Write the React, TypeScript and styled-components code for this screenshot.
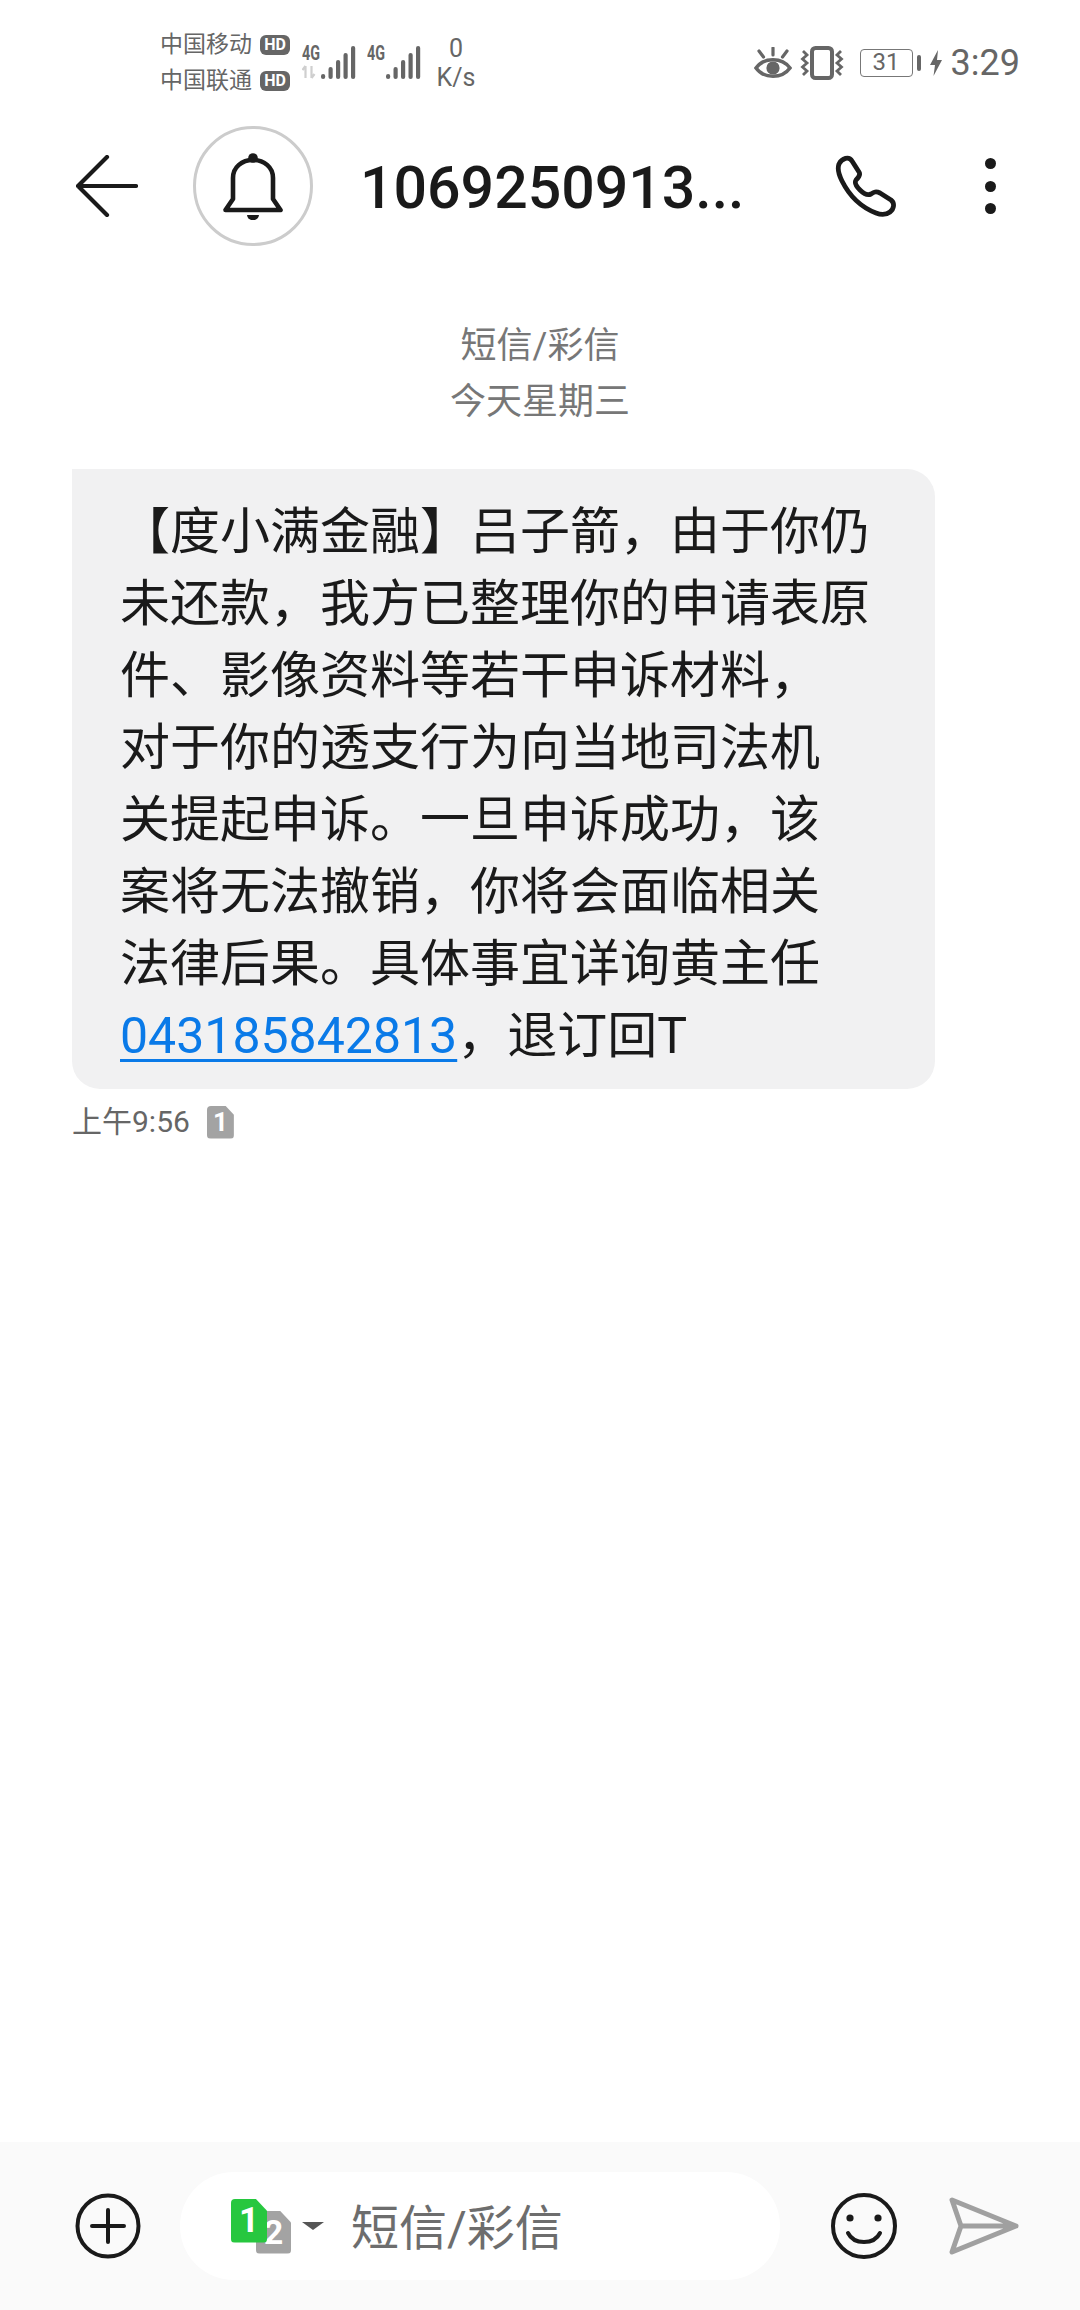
import styled, { createGlobalStyle } from "styled-components";

const GlobalStyle = createGlobalStyle`
  html, body {
    margin: 0;
    padding: 0;
    background: #ffffff;
  }
  body {
    font-family: Roboto, "Noto Sans CJK SC", sans-serif;
  }
`;

const messageLines = [
  "【度小满金融】吕子箭，由于你仍",
  "未还款，我方已整理你的申请表原",
  "件、影像资料等若干申诉材料，",
  "对于你的透支行为向当地司法机",
  "关提起申诉。一旦申诉成功，该",
  "案将无法撤销，你将会面临相关",
  "法律后果。具体事宜详询黄主任",
];

export default function App() {
  return (
    <Page>
      <GlobalStyle />
      <StatusBar>
        <Carriers>
          <CarrierRow>
            中国移动<HdBadge>HD</HdBadge>
          </CarrierRow>
          <CarrierRow>
            中国联通<HdBadge>HD</HdBadge>
          </CarrierRow>
        </Carriers>
        <SignalGroup>
          <SignalIcon showArrows />
          <SignalIcon />
        </SignalGroup>
        <Speed>
          <span>0</span>
          <span>K/s</span>
        </Speed>
        <StatusRight>
          <svg width="38" height="32" viewBox="0 0 38 32">
            <path d="M2 21 C10 10 28 10 36 21 C28 32 10 32 2 21 Z" fill="none" stroke="#666" strokeWidth="3.6" />
            <circle cx="19" cy="21" r="6.6" fill="#666" />
            <path d="M19 1 V8 M5 4 L9.5 10 M33 4 L28.5 10" stroke="#666" strokeWidth="3.2" strokeLinecap="round" />
          </svg>
          <svg width="44" height="34" viewBox="0 0 44 34">
            <rect x="12" y="2" width="20" height="30" rx="3.5" fill="none" stroke="#666" strokeWidth="4" />
            <path d="M3 5 L7 9 L2.5 13 L7 17 L2.5 21 L7 25 L3 29 M41 5 L37 9 L41.5 13 L37 17 L41.5 21 L37 25 L41 29" fill="none" stroke="#666" strokeWidth="2.8" />
          </svg>
          <Battery>
            <BatteryBody>31</BatteryBody>
            <BatteryCap />
          </Battery>
          <svg width="14" height="26" viewBox="0 0 14 26">
            <path d="M9 0 L1 15 H6 L4.5 26 L13 10 H8 Z" fill="#666" />
          </svg>
          <Clock>3:29</Clock>
        </StatusRight>
      </StatusBar>

      <Header>
        <BackButton>
          <svg width="62" height="62" viewBox="0 0 62 62">
            <path d="M31 2 L2 31 L31 60 M2 31 H60" fill="none" stroke="#1a1a1a" strokeWidth="4.2" strokeLinecap="round" strokeLinejoin="round" />
          </svg>
        </BackButton>
        <Avatar>
          <svg width="60" height="68" viewBox="0 -1 60 68">
            <circle cx="30" cy="5" r="4.8" fill="#1a1a1a" />
            <path d="M2.5 57 L10 46 V25 C10 14 19 7 30 7 C41 7 50 14 50 25 V46 L57.5 57 Z" fill="none" stroke="#1a1a1a" strokeWidth="4.6" strokeLinejoin="round" />
            <path d="M24 62 H36 C35.5 69 24.5 69 24 62 Z" fill="#1a1a1a" />
          </svg>
        </Avatar>
        <Title>1069250913...</Title>
        <PhoneButton>
          <svg width="62" height="62" viewBox="0 0 62 62">
            <path d="M4 9 C7 3 14 1 17 6 L24 17 C26 20 23 23 21 25 C19 28 21 31 25 35 C29 39 32 41 36 39 C39 37 41 36 45 38 L56 45 C60 48 59 54 55 57 C51 60 46 60 41 58 C28 53 15 42 7 26 C4 20 2 14 4 9 Z" fill="none" stroke="#1a1a1a" strokeWidth="4.8" strokeLinejoin="round" />
          </svg>
        </PhoneButton>
        <MoreButton>
          <Dot />
          <Dot />
          <Dot />
        </MoreButton>
      </Header>

      <ThreadInfo>
        <span>短信/彩信</span>
        <span>今天星期三</span>
      </ThreadInfo>

      <Bubble>
        {messageLines.map((line) => (
          <MessageLine key={line}>{line}</MessageLine>
        ))}
        <MessageLine>
          <PhoneLink>043185842813</PhoneLink>，退订回T
        </MessageLine>
      </Bubble>

      <MessageMeta>
        <span>上午9:56</span>
        <SimTag $color="#a3a3a3" $width={27} $height={33}>1</SimTag>
      </MessageMeta>

      <Spacer />

      <Composer>
        <svg width="66" height="66" viewBox="0 0 66 66">
          <circle cx="33" cy="33" r="30.5" fill="none" stroke="#1a1a1a" strokeWidth="4" />
          <path d="M17 33 H49 M33 17 V49" stroke="#1a1a1a" strokeWidth="4" strokeLinecap="round" />
        </svg>
        <InputBox>
          <SimStack>
            <BackSim>
              <SimTag $color="#a3a3a3" $width={35} $height={43}>2</SimTag>
            </BackSim>
            <FrontSim>
              <SimTag $color="#27c73f" $width={36} $height={44}>1</SimTag>
            </FrontSim>
          </SimStack>
          <Caret />
          <Placeholder>短信/彩信</Placeholder>
        </InputBox>
        <EmojiIcon>
          <svg width="66" height="66" viewBox="0 0 66 66">
            <circle cx="33" cy="33" r="31" fill="none" stroke="#1a1a1a" strokeWidth="4" />
            <circle cx="19" cy="25" r="3.6" fill="#1a1a1a" />
            <circle cx="47" cy="25" r="3.6" fill="#1a1a1a" />
            <path d="M17 40 C23 52 43 52 49 40" fill="none" stroke="#1a1a1a" strokeWidth="4" strokeLinecap="round" />
          </svg>
        </EmojiIcon>
        <SendIcon>
          <svg width="70" height="58" viewBox="0 0 70 58">
            <path d="M3 3 L67 29 L3 55 L12 29 Z M12 29 H67" fill="none" stroke="#a0a0a0" strokeWidth="5" strokeLinejoin="round" strokeLinecap="round" />
          </svg>
        </SendIcon>
      </Composer>
    </Page>
  );
}

function SignalIcon({ showArrows = false }: { showArrows?: boolean }) {
  const bars = [5, 12, 19, 26, 33];
  return (
    <svg width="54" height="46" viewBox="0 -5 54 46">
      <text x="0" y="15" fontFamily="Roboto, sans-serif" fontSize="21" fontWeight="700" fill="#666" textLength="18" lengthAdjust="spacingAndGlyphs">
        4G
      </text>
      {showArrows && (
        <path d="M3.5 21 V33 M3.5 21 L0.5 25 M9.5 21 V33 M9.5 33 L12.5 29" stroke="#cfcfcf" strokeWidth="2.2" fill="none" />
      )}
      {bars.map((h, i) => (
        <rect key={h} x={19 + i * 7.5} y={34 - h} width="4.2" height={h} rx="2.1" fill="#666" />
      ))}
    </svg>
  );
}

const Page = styled.div`
  width: 1080px;
  height: 2310px;
  display: flex;
  flex-direction: column;
  background: #ffffff;
  overflow: hidden;
`;

const StatusBar = styled.div`
  height: 112px;
  padding: 13px 60px 0 160px;
  box-sizing: border-box;
  display: flex;
  align-items: center;
  color: #666666;
`;

const Carriers = styled.div`
  display: flex;
  flex-direction: column;
  gap: 8px;
  width: 130px;
`;

const CarrierRow = styled.div`
  display: flex;
  align-items: center;
  justify-content: space-between;
  font-size: 23px;
  line-height: 28px;
  white-space: nowrap;
`;

const HdBadge = styled.span`
  width: 30px;
  height: 20px;
  background: #666666;
  color: #ffffff;
  border-radius: 6px;
  font-size: 16px;
  line-height: 20px;
  font-weight: 700;
  text-align: center;
`;

const SignalGroup = styled.div`
  display: flex;
  gap: 11px;
  margin-left: 12px;
`;

const Speed = styled.div`
  display: flex;
  flex-direction: column;
  align-items: center;
  margin-left: 13px;
  width: 44px;
  font-size: 25px;
  line-height: 29px;
`;

const StatusRight = styled.div`
  margin-left: auto;
  display: flex;
  align-items: center;
  gap: 8px;
`;

const Battery = styled.div`
  display: flex;
  align-items: center;
  gap: 4px;
  margin-left: 8px;
`;

const BatteryBody = styled.div`
  width: 53px;
  height: 28px;
  box-sizing: border-box;
  border: 1.5px solid #777777;
  border-radius: 4px;
  font-size: 24px;
  line-height: 25px;
  text-align: center;
`;

const BatteryCap = styled.div`
  width: 4px;
  height: 16px;
  border-radius: 2px;
  background: #666666;
`;

const Clock = styled.span`
  font-size: 36px;
  line-height: 40px;
`;

const Header = styled.div`
  height: 148px;
  display: flex;
  align-items: center;
  padding-left: 76px;
  color: #1a1a1a;
`;

const BackButton = styled.div`
  display: flex;
  width: 117px;
`;

const Avatar = styled.div`
  width: 120px;
  height: 120px;
  box-sizing: border-box;
  border: 3px solid #cccccc;
  border-radius: 50%;
  display: flex;
  align-items: center;
  justify-content: center;
`;

const Title = styled.div`
  width: 522px;
  padding: 2px 0 0 47px;
  box-sizing: border-box;
  font-size: 59px;
  font-weight: 500;
  white-space: nowrap;
`;

const PhoneButton = styled.div`
  display: flex;
`;

const MoreButton = styled.div`
  display: flex;
  flex-direction: column;
  gap: 11.5px;
  margin-left: 88px;
`;

const Dot = styled.span`
  width: 11px;
  height: 11px;
  border-radius: 50%;
  background: #1a1a1a;
`;

const ThreadInfo = styled.div`
  margin-top: 58px;
  display: flex;
  flex-direction: column;
  align-items: center;
  color: #777777;
  font-size: 36px;
  line-height: 56px;
`;

const Bubble = styled.div`
  width: 863px;
  margin: 39px 0 0 72px;
  padding: 27px 0 17px 48px;
  box-sizing: border-box;
  background: #f1f1f2;
  border-radius: 0 28px 28px 28px;
  color: #1a1a1a;
  font-size: 50px;
`;

const MessageLine = styled.div`
  height: 72px;
  line-height: 72px;
  white-space: nowrap;
`;

const PhoneLink = styled.span`
  color: #0a7ae8;
  text-decoration: underline;
  text-decoration-thickness: 3px;
  text-underline-offset: 6px;
`;

const MessageMeta = styled.div`
  margin: 15px 0 0 72px;
  display: flex;
  align-items: center;
  gap: 17px;
  color: #666666;
  font-size: 30px;
  line-height: 36px;
`;

const SimTag = styled.span<{ $color: string; $width: number; $height: number }>`
  display: flex;
  align-items: center;
  justify-content: center;
  width: ${(p) => p.$width}px;
  height: ${(p) => p.$height}px;
  background: ${(p) => p.$color};
  color: #ffffff;
  font-size: ${(p) => Math.round(p.$height * 0.8)}px;
  font-weight: 700;
  border-radius: 4px;
  clip-path: polygon(0 0, 68% 0, 100% 28%, 100% 100%, 0 100%);
`;

const SimStack = styled.div`
  position: relative;
  width: 60px;
  height: 55px;
`;

const BackSim = styled.div`
  position: absolute;
  right: 0;
  bottom: 0;
`;

const FrontSim = styled.div`
  position: absolute;
  left: 0;
  top: 0;
`;

const Spacer = styled.div`
  flex: 1;
`;

const Composer = styled.div`
  height: 168px;
  box-sizing: border-box;
  background: #fafafa;
  display: flex;
  align-items: center;
  padding: 0 60px 0 75px;
`;

const InputBox = styled.div`
  width: 600px;
  height: 108px;
  margin-left: 39px;
  padding-left: 51px;
  box-sizing: border-box;
  background: #ffffff;
  border-radius: 54px;
  display: flex;
  align-items: center;
`;

const Caret = styled.span`
  width: 0;
  height: 0;
  margin-left: 11px;
  border-left: 11px solid transparent;
  border-right: 11px solid transparent;
  border-top: 8px solid #555555;
`;

const Placeholder = styled.span`
  margin-left: 27px;
  padding-bottom: 4px;
  color: #6d6d6d;
  font-size: 48px;
  white-space: nowrap;
`;

const EmojiIcon = styled.div`
  display: flex;
  margin-left: 51px;
`;

const SendIcon = styled.div`
  display: flex;
  margin-left: 52px;
`;
